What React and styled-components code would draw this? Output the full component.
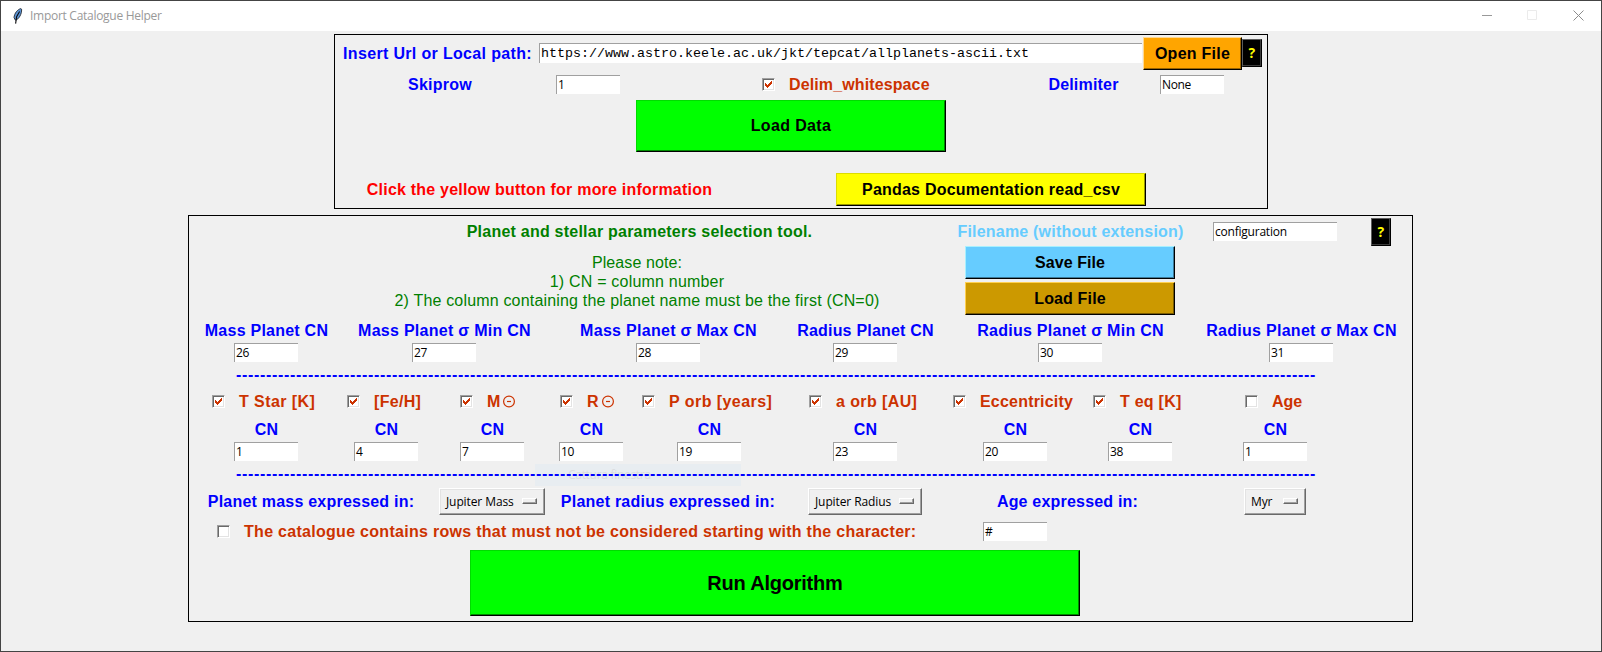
import React from "react";
import styled, { createGlobalStyle } from "styled-components";

const Global = createGlobalStyle`
  * { box-sizing: border-box; }
  html, body { margin: 0; padding: 0; background: #f0f0f0; }
`;

const ui = `"Open Sans", "Noto Sans", sans-serif`;
const arial = `"Liberation Sans", Arial, sans-serif`;

const Window = styled.div`
  width: 1602px;
  height: 652px;
  border: 1px solid #444;
  background: #f0f0f0;
  display: flex;
  flex-direction: column;
  align-items: center;
  overflow: hidden;
  font-family: ${arial};
`;

const TitleBar = styled.header`
  width: 100%;
  height: 30px;
  flex: none;
  background: #fff;
  display: flex;
  align-items: center;
  padding-left: 11px;
  svg { flex: none; }
`;

const TitleText = styled.span`
  font: 12px/16px ${ui};
  letter-spacing: -0.28px;
  color: #999;
  margin-left: 6px;
  flex: 1;
`;

const WindowButton = styled.span`
  width: 46px;
  height: 30px;
  padding: 0 0 2px ${(p) => p.$shift || 0}px;
  display: flex;
  align-items: center;
  justify-content: center;
`;

const Panel = styled.section`
  position: relative;
  flex: none;
  width: ${(p) => p.$w}px;
  height: ${(p) => p.$h}px;
  margin-top: ${(p) => p.$top}px;
  margin-right: ${(p) => p.$right || 0}px;
  border: 1px solid #000;
  display: flex;
  flex-direction: column;
`;

const Row = styled.div`
  display: flex;
  flex: none;
  align-items: center;
  height: ${(p) => p.$h}px;
  margin-top: ${(p) => p.$top || 0}px;
  padding-left: ${(p) => p.$indent || 0}px;
`;

const GridRow = styled(Row)`
  display: grid;
  grid-template-columns: ${(p) => p.$cols};
  justify-items: ${(p) => p.$justify || "center"};
`;

const Label = styled.span`
  font-size: 16px;
  line-height: 18px;
  font-weight: bold;
  white-space: pre;
  padding-left: 1px;
  color: ${(p) => p.$color || "#0000ff"};
  letter-spacing: ${(p) => p.$ls ?? 0.25}px;
`;

const PathLabel = styled(Label)`
  width: 197px;
`;

const Entry = styled.div`
  flex: none;
  width: ${(p) => p.$w || 64}px;
  height: ${(p) => p.$h || 19}px;
  background: #fff;
  border-top: 1px solid #a0a0a0;
  border-left: 1px solid #a0a0a0;
  padding-left: 1px;
  font: 12px/17px ${ui};
  letter-spacing: ${(p) => p.$ls ?? -0.4}px;
  color: #000;
  white-space: nowrap;
`;

const UrlEntry = styled(Entry)`
  font: 13.33px/19px "Liberation Mono", "Courier New", monospace;
  letter-spacing: 0;
  margin: 0 1px 1px 0;
`;

const Button = styled.button`
  flex: none;
  width: ${(p) => p.$w}px;
  height: ${(p) => p.$h}px;
  padding: 0;
  border: 1px solid ${(p) => p.$light};
  border-right-color: #000;
  border-bottom-color: #000;
  border-radius: 0;
  background: ${(p) => p.$bg};
  box-shadow: inset -1px -1px 0 ${(p) => p.$dark};
  color: #000;
  font: bold ${(p) => p.$size || 16}px/18px ${arial};
  letter-spacing: ${(p) => p.$ls ?? 0.25}px;
`;

const HelpButton = styled(Button).attrs({
  $w: 20, $h: 28, $bg: "#000", $light: "#5c5c5c", $dark: "#3c3c3c",
})`
  color: #ffff00;
  font: bold 14px/16px ${ui};
  margin-top: ${(p) => p.$mt || 0}px;
  margin-bottom: ${(p) => p.$mb || 0}px;
`;

const CheckLabel = styled.label`
  display: flex;
  align-items: center;
  justify-self: start;
  gap: 13px;
  margin-left: ${(p) => p.$indent || 0}px;
`;

const CheckBox = styled.span`
  flex: none;
  width: 13px;
  height: 13px;
  background: #fff;
  border: 1px solid;
  border-color: #a0a0a0 #fff #fff #a0a0a0;
  box-shadow: inset 1px 1px 0 #696969, inset -1px -1px 0 #e3e3e3;
  svg { display: block; margin: -1px; }
`;

const OptionMenu = styled.div`
  width: ${(p) => p.$w}px;
  height: 27px;
  border: 1px solid;
  border-color: #fff #696969 #696969 #fff;
  box-shadow: inset -1px -1px 0 #a0a0a0, inset 1px 1px 0 #e3e3e3;
  display: flex;
  align-items: center;
  justify-content: space-between;
  padding: 0 7px 0 6px;
  font: 12px/16px ${ui};
  letter-spacing: -0.1px;
  white-space: nowrap;
`;

const Indicator = styled.span`
  width: 15px;
  height: 6px;
  margin-top: -2px;
  border: 1px solid;
  border-color: #fff #696969 #696969 #fff;
  box-shadow: inset -1px -1px 0 #a0a0a0;
`;

const Notes = styled.div`
  width: 612px;
  padding: 2px 4px 0 0;
  color: #008000;
  font-size: 16px;
  line-height: 19px;
  text-align: center;
`;

const NoteLine = styled.div`
  letter-spacing: ${(p) => p.$ls}px;
`;

const FileButtons = styled.div`
  width: 250px;
  display: flex;
  flex-direction: column;
  align-items: center;
  gap: 3px;
`;

const Symbol = styled.svg`
  margin-left: 3px;
  vertical-align: -1px;
`;

const Ghost = styled.div`
  position: absolute;
  left: 346px;
  top: 248px;
  width: 206px;
  height: 22px;
  padding-left: 33px;
  background: #e8edf1;
  color: #dadddf;
  font: 12px/22px ${ui};
  letter-spacing: -0.3px;
`;

const Dashes = styled(Label)`
  position: relative;
  letter-spacing: 0.672px;
`;

function Feather() {
  return (
    <svg width="12" height="16" viewBox="0 0 12 16">
      <path d="M8.8 .6C5.6 1.4 2.4 5.2 2 9.6L3.4 12.2C6.8 11.4 9.9 6 9.6 1.2Z" fill="#5b94d6" stroke="#25282f" strokeWidth="0.9" />
      <path d="M7.6 3.6L4.6 8.8L3.6 15.6" fill="none" stroke="#0b0b0e" strokeWidth="1.1" />
    </svg>
  );
}

function Check({ text, on = true, indent, ls, sun }) {
  return (
    <CheckLabel $indent={indent}>
      <CheckBox>
        {on && (
          <svg width="13" height="13" viewBox="0 0 13 13" shapeRendering="crispEdges">
            <path d="M3 5h1v1h1v1h1v-1h1v-1h1v-1h1v-1h1v3h-1v1h-1v1h-1v1h-1v1h-1v-1h-1v-1h-1z" fill="#cc3300" />
          </svg>
        )}
      </CheckBox>
      <Label $color="#cc3300" $ls={ls}>
        {text}
        {sun && (
          <Symbol width="12" height="13" viewBox="0 0 12 13">
            <circle cx="6" cy="6.5" r="5.4" fill="none" stroke="#cc3300" strokeWidth="1.2" />
            <path d="M4 6.5h4" stroke="#cc3300" strokeWidth="1.2" />
          </Symbol>
        )}
      </Label>
    </CheckLabel>
  );
}

const planetCols = "154px 202px 246px 148px 262px 200px";
const planetFields = [
  ["Mass Planet CN", "26", 0.24],
  ["Mass Planet σ Min CN", "27", 0.27],
  ["Mass Planet σ Max CN", "28", 0.29],
  ["Radius Planet CN", "29", 0.21],
  ["Radius Planet σ Min CN", "30", 0.27],
  ["Radius Planet σ Max CN", "31", 0.28],
];

const starCols = "154px 86px 126px 72px 164px 148px 152px 98px 172px";
const starFields = [
  { text: "T Star [K]", value: "1", indent: 23, ls: 0.42 },
  { text: "[Fe/H]", value: "4", indent: 4, ls: 0.3 },
  { text: "M", value: "7", indent: 31, ls: 0, sun: true },
  { text: "R", value: "10", indent: 5, ls: 0, sun: true },
  { text: "P orb [years]", value: "19", indent: 15, ls: 0.45 },
  { text: "a orb [AU]", value: "23", indent: 18, ls: 0.4 },
  { text: "Eccentricity", value: "20", indent: 14, ls: 0.2 },
  { text: "T eq [K]", value: "38", indent: 2, ls: 0.25 },
  { text: "Age", value: "1", indent: 56, ls: 0, on: false },
];

const green = { $bg: "#00ff00", $light: "#00dc00", $dark: "#008a00" };

export default function App() {
  return (
    <Window>
      <Global />
      <TitleBar>
        <Feather />
        <TitleText>Import Catalogue Helper</TitleText>
        <WindowButton $shift={2}>
          <svg width="10" height="10"><path d="M0 5.5h10" stroke="#999" /></svg>
        </WindowButton>
        <WindowButton>
          <svg width="10" height="10"><path d="M.5 .5h9v9h-9z" fill="none" stroke="#ebebeb" /></svg>
        </WindowButton>
        <WindowButton>
          <svg width="11" height="11"><path d="M.5 .5l10 10M10.5 .5l-10 10" stroke="#8c8c8c" /></svg>
        </WindowButton>
      </TitleBar>

      <Panel $w={934} $h={175} $top={3}>
        <Row $h={37} $indent={7}>
          <PathLabel $ls={0.34}>Insert Url or Local path:</PathLabel>
          <UrlEntry $w={603} $h={20}>https://www.astro.keele.ac.uk/jkt/tepcat/allplanets-ascii.txt</UrlEntry>
          <Button $w={99} $h={33} $bg="#ffa500" $light="#ffd890" $dark="#996300">Open File</Button>
          <HelpButton $mb={1}>?</HelpButton>
        </Row>
        <GridRow $h={25} $cols="209px 88px 401px 100px 118px">
          <Label>Skiprow</Label>
          <Entry>1</Entry>
          <Check text="Delim_whitespace" ls={0.12} indent={130} />
          <Label $ls={0.19}>Delimiter</Label>
          <Entry>None</Entry>
        </GridRow>
        <GridRow $h={52} $top={3} $cols="912px">
          <Button $w={310} $h={52} {...green} $ls={0.35}>Load Data</Button>
        </GridRow>
        <GridRow $h={33} $top={21} $cols="408px 496px">
          <Label $color="#ff0000" $ls={0.21}>Click the yellow button for more information</Label>
          <Button $w={310} $h={33} $bg="#ffff00" $light="#dcdc00" $dark="#999900" $ls={0.22}>Pandas Documentation read_csv</Button>
        </GridRow>
      </Panel>

      <Panel $w={1225} $h={407} $top={6} $right={1}>
        <Ghost>Cattura finestra</Ghost>
        <GridRow $h={29} $top={1} $indent={144} $cols="612px 250px 160px 52px">
          <Label $color="#008000" $ls={0.23}>Planet and stellar parameters selection tool.</Label>
          <Label $color="#66ccff" $ls={0.2}>Filename (without extension)</Label>
          <Entry $w={124} $ls={-0.22}>configuration</Entry>
          <HelpButton $mt={1}>?</HelpButton>
        </GridRow>
        <Row $h={69} $indent={144}>
          <Notes>
            <NoteLine $ls={0.1}>Please note:</NoteLine>
            <NoteLine $ls={0.2}>1) CN = column number</NoteLine>
            <NoteLine $ls={0.18}>2) The column containing the planet name must be the first (CN=0)</NoteLine>
          </Notes>
          <FileButtons>
            <Button $w={210} $h={33} $bg="#66ccff" $light="#a8f0ff" $dark="#3d7a99" $ls={0.08}>Save File</Button>
            <Button $w={210} $h={33} $bg="#cc9900" $light="#ffd050" $dark="#7a5c00" $ls={0.15}>Load File</Button>
          </FileButtons>
        </Row>

        <GridRow $h={21} $top={5} $cols={planetCols}>
          {planetFields.map(([text, , ls]) => <Label key={text} $ls={ls}>{text}</Label>)}
        </GridRow>
        <GridRow $h={19} $top={2} $cols={planetCols}>
          {planetFields.map(([text, value]) => <Entry key={text}>{value}</Entry>)}
        </GridRow>
        <Row $h={25} $indent={46}><Dashes>{"-".repeat(180)}</Dashes></Row>

        <GridRow $h={29} $cols={starCols} $justify="start">
          {starFields.map((f) => <Check key={f.text} {...f} />)}
        </GridRow>
        <GridRow $h={21} $top={3} $cols={starCols}>
          {starFields.map((f) => <Label key={f.text}>CN</Label>)}
        </GridRow>
        <GridRow $h={19} $top={2} $cols={starCols}>
          {starFields.map((f) => <Entry key={f.text}>{f.value}</Entry>)}
        </GridRow>
        <Row $h={25} $indent={46}><Dashes>{"-".repeat(180)}</Dashes></Row>

        <GridRow $h={27} $top={2} $cols="243px 120px 231px 164px 240px 176px">
          <Label $ls={0.22}>Planet mass expressed in:</Label>
          <OptionMenu $w={106}>Jupiter Mass<Indicator /></OptionMenu>
          <Label $ls={0.23}>Planet radius expressed in:</Label>
          <OptionMenu $w={114}>Jupiter Radius<Indicator /></OptionMenu>
          <Label $ls={0.2}>Age expressed in:</Label>
          <OptionMenu $w={62}>Myr<Indicator /></OptionMenu>
        </GridRow>
        <GridRow $h={25} $top={4} $cols="794px 64px" $justify="start">
          <Check text="The catalogue contains rows that must not be considered starting with the character:" on={false} indent={28} ls={0.29} />
          <Entry>#</Entry>
        </GridRow>
        <Row $h={66} $top={6} $indent={281}>
          <Button $w={610} $h={66} {...green} $size={20} $ls={-0.22}>Run Algorithm</Button>
        </Row>
      </Panel>
    </Window>
  );
}
